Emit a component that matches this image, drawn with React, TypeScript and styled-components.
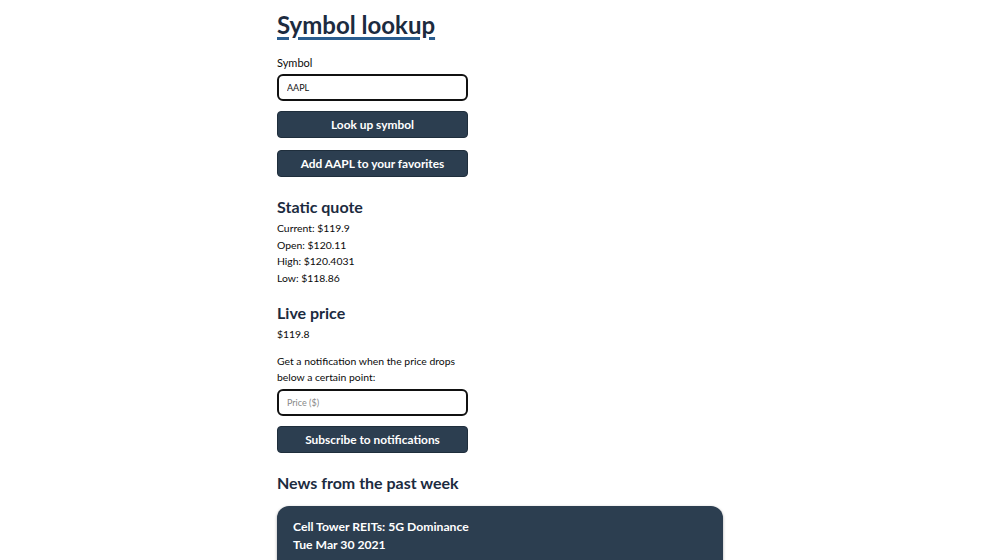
import React from "react";
import styled, { createGlobalStyle } from "styled-components";

const Global = createGlobalStyle`
  html, body { margin: 0; padding: 0; background: #ffffff; }
  body { font-family: Lato, "Open Sans", sans-serif; color: #0a0a0a; }
  * { box-sizing: border-box; }
`;

const Page = styled.main`
  width: 446px;
  margin: 0 auto;
  padding-top: 7px;
  display: flex;
  flex-direction: column;
`;

const Title = styled.h1`
  margin: 0;
  font-size: 24px;
  line-height: 36px;
  font-weight: 700;
  color: #1c2b3f;
`;

const TitleLink = styled.a`
  color: #1c2b3f;
  text-decoration: underline;
  text-decoration-color: #2a5d8f;
  text-decoration-thickness: 3px;
  text-underline-offset: 3px;
`;

const Form = styled.form`
  width: 191px;
  display: flex;
  flex-direction: column;
`;

const Label = styled.label`
  font-size: 11px;
  line-height: 16px;
  margin-top: 12px;
  margin-bottom: 3px;
`;

const Input = styled.input`
  width: 191px;
  height: 27px;
  border: 2px solid #111;
  border-radius: 6px;
  padding: 0 8px;
  font-family: inherit;
  font-size: 9px;
  color: #111;
  &::placeholder { color: #888; }
`;

const Button = styled.button<{ $gap?: number }>`
  width: 191px;
  height: 27px;
  margin-top: ${(p) => p.$gap ?? 11}px;
  background: #2c3e50;
  border: 1px solid #1f2e3c;
  border-radius: 4px;
  color: #fff;
  font-family: inherit;
  font-weight: 700;
  font-size: 11.9px;
`;

const Heading = styled.h2<{ $top: number }>`
  margin: ${(p) => p.$top}px 0 2px;
  font-size: 16px;
  line-height: 22px;
  font-weight: 700;
  color: #1c2b3f;
`;

const Line = styled.p`
  margin: 0;
  font-size: 10.4px;
  line-height: 16.5px;
`;

const Para = styled.p`
  margin: 10px 0 3px;
  font-size: 10.4px;
  line-height: 16.5px;
  width: 190px;
`;

const Card = styled.article`
  margin-top: 10px;
  background: #2c3e50;
  border-radius: 12px;
  box-shadow: 0 1px 3px rgba(0, 0, 0, 0.35);
  padding: 12px 16px 16px;
  color: #fff;
`;

const CardTitle = styled.h3`
  margin: 0;
  font-size: 12.2px;
  line-height: 18px;
  font-weight: 700;
`;

const CardBody = styled.p`
  margin: 2px 0 0;
  font-size: 10.4px;
  line-height: 16px;
  color: #e8edf2;
`;

export default function App() {
  return (
    <>
      <Global />
      <Page>
        <Title>
          <TitleLink href="#">Symbol lookup</TitleLink>
        </Title>
        <Form onSubmit={(e) => e.preventDefault()}>
          <Label htmlFor="sym">Symbol</Label>
          <Input id="sym" defaultValue="AAPL" />
          <Button type="submit" $gap={10}>Look up symbol</Button>
          <Button type="button" $gap={12}>Add AAPL to your favorites</Button>
        </Form>
        <Heading $top={19}>Static quote</Heading>
        <Line>Current: $119.9</Line>
        <Line>Open: $120.11</Line>
        <Line>High: $120.4031</Line>
        <Line>Low: $118.86</Line>
        <Heading $top={16}>Live price</Heading>
        <Line>$119.8</Line>
        <Form onSubmit={(e) => e.preventDefault()}>
          <Para>Get a notification when the price drops below a certain point:</Para>
          <Input placeholder="Price ($)" />
          <Button type="submit" $gap={10}>Subscribe to notifications</Button>
        </Form>
        <Heading $top={19}>News from the past week</Heading>
        <Card>
          <CardTitle>Cell Tower REITs: 5G Dominance</CardTitle>
          <CardTitle>Tue Mar 30 2021</CardTitle>
          <CardBody>
            Over the first weeks of the year, shares of the big three Cell Tower REITs have slumped amid concerns
            over rising rates and heavy spending on new 5G spectrum.
          </CardBody>
        </Card>
      </Page>
    </>
  );
}
